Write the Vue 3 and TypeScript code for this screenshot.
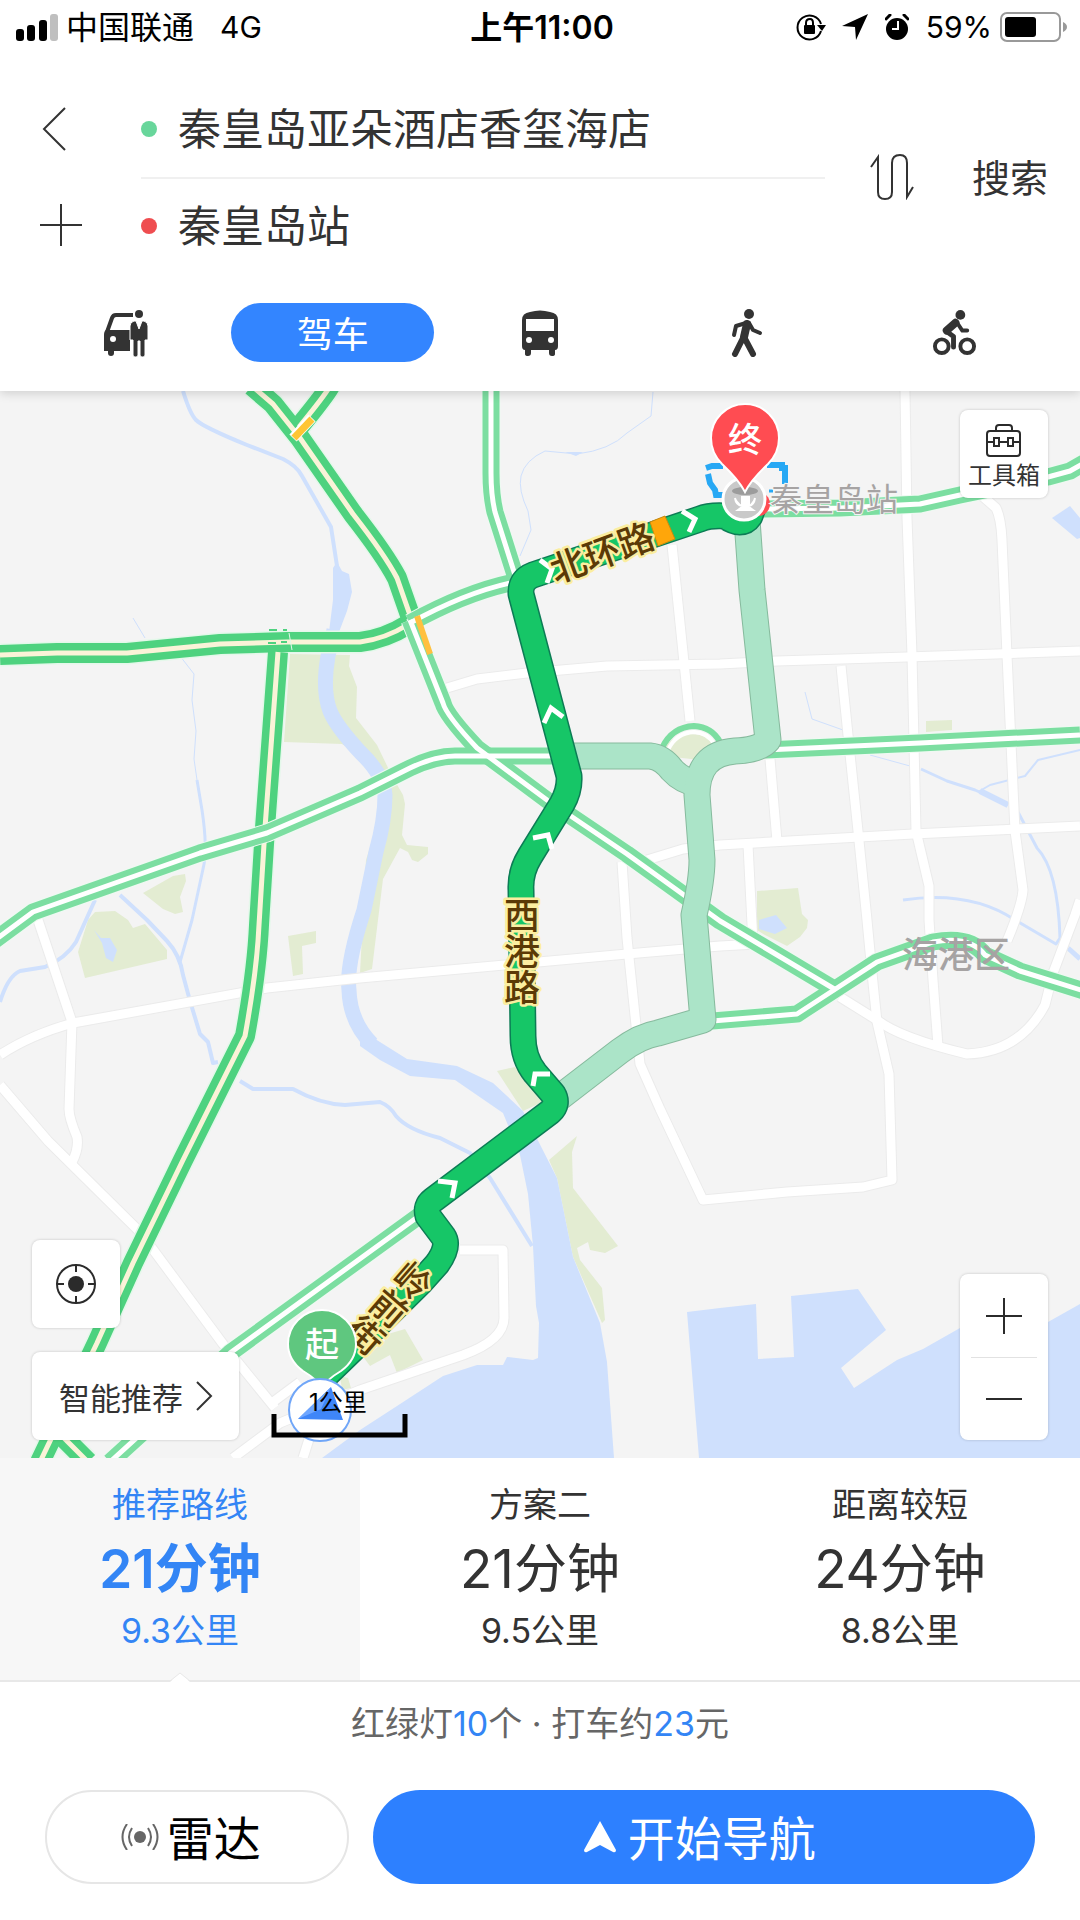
<script setup lang="ts">
import { ref } from 'vue'

interface RoutePlan {
  id: number
  name: string
  minutes: number
  distance: string
}

const origin = ref('秦皇岛亚朵酒店香玺海店')
const destination = ref('秦皇岛站')
const selected = ref(0)

const plans: RoutePlan[] = [
  { id: 0, name: '推荐路线', minutes: 21, distance: '9.3公里' },
  { id: 1, name: '方案二', minutes: 21, distance: '9.5公里' },
  { id: 2, name: '距离较短', minutes: 24, distance: '8.8公里' },
]

const seas: string[] = [
  'M360 1020 L372 1037 L407 1059 L457 1066 L493 1083 L523 1111 L557 1178 L573 1257 L600 1323 L607 1362 L614 1458 L322 1458 L360 1430 L397 1406 L443 1376 L477 1365 L503 1365 L507 1357 L533 1360 L538 1358 L539 1323 L536 1306 L533 1246 L528 1194 L520 1155 L503 1113 L455 1080 L410 1076 L380 1060 L360 1046 Z',
  'M687 1312 L720 1308 L756 1304 L758 1359 L794 1357 L791 1296 L858 1289 L886 1330 L841 1368 L854 1388 L897 1360 L923 1349 L960 1328 L1048 1322 L1080 1304 V1458 H699 Z',
  'M333 568 L337 562 L342 571 L349 574 L352 592 L347 611 L339 632 H329 L333 600 Z',
  'M1052 518 L1070 506 L1080 518 V538 L1077 539 Z',
  'M565 452 L583 452 L576 456 Z',
]

const parks: string[] = [
  'M88 920 L95 912 L115 911 L128 920 L133 928 L145 924 L167 950 V959 L85 978 L78 952 Z',
  'M143 893 L173 876 L185 874 L186 881 L180 897 L183 912 L175 914 L163 909 Z',
  'M290 654 L350 655 L349 666 L357 687 L356 718 L377 745 L392 776 L403 795 L405 804 L402 835 L407 845 L428 847 V854 L418 862 L412 860 L408 852 L400 848 L383 879 L372 969 L360 973 L366 860 L385 800 L360 755 L342 744 L284 742 Z',
  'M288 936 L316 931 V943 L302 946 L303 974 L293 976 Z',
  'M497 1071 L515 1067 L545 1101 L523 1111 Z',
  'M577 1136 L572 1152 L573 1188 L618 1246 L605 1253 L590 1250 L588 1242 L577 1248 L580 1260 L602 1288 L605 1320 L602 1323 L573 1257 L557 1178 L549 1160 Z',
  'M364 1358 L384 1342 L388 1334 L405 1329 L423 1360 L397 1373 L390 1355 L370 1366 Z',
  'M340 1376 L348 1378 L351 1388 L342 1390 Z',
  'M757 891 L798 888 L802 914 L808 920 L807 928 L800 937 L787 946 L765 935 L757 930 Z',
  'M926 721 L952 720 V730 L926 732 Z',
]

const streams: { d: string; w: number }[] = [
  { d: 'M183 391 Q190 414 196 420 Q203 427 247 445 L283 459 Q297 466 302 476 L331 527 L337 566', w: 4 },
  { d: 'M334 630 L328 656 Q322 690 330 711 Q336 726 360 752 Q384 775 385 795 Q385 820 376 852 L364 910 Q346 965 349 990 Q350 1022 372 1044', w: 15 },
  { d: 'M240 1081 L253 1089 L293 1089 Q320 1104 345 1105 L380 1102 Q390 1106 396 1116 Q408 1130 440 1138 L470 1153 L490 1178 L532 1246', w: 4 },
  { d: 'M120 895 L147 920 L167 941 Q180 955 183 975 L190 1001 L200 1034 L208 1042 L213 1063 L218 1062', w: 4 },
  { d: 'M180 962 L192 920 L203 869 Q208 850 202 810 L197 780', w: 3 },
  { d: 'M197 780 L194 759 L196 731 L192 700 L194 674 L180 656 M145 638 L133 618', w: 1 },
  { d: 'M0 1002 Q8 976 20 971 L45 967 Q66 958 76 942 L95 900', w: 4 },
  { d: 'M653 392 L651 416 L627 433 Q610 450 577 454 L545 451 Q525 460 521 476 Q518 490 528 511 L531 530 L520 556', w: 1 },
  { d: 'M921 769 L947 781 L975 790 L1008 805', w: 3 },
  { d: 'M980 791 L1008 805', w: 6 },
  { d: 'M1018 812 L1037 848 Q1058 870 1060 938 L1056 944 L1015 920 Q970 890 903 900', w: 3 },
  { d: 'M1080 750 L1038 760 L1025 776 L990 785 L978 792', w: 2 },
  { d: 'M805 692 L812 719 L843 730 M870 755 L910 766', w: 1 },
  { d: 'M1068 948 L1080 959', w: 5 },
]

const streets: string[] = [
  'M447 688 L477 679 L527 673 L607 666 L720 664 L777 661 L907 657 L1080 651',
  'M672 545 L690 721',
  'M905 391 L907 518 L912 655 L916 831 L929 886 V920 L933 980 L938 1046',
  'M980 494 L996 508 Q1001 518 1002 540 L1007 655 L1015 831 L1023 890 Q1022 905 1007 941',
  'M841 666 L848 735 L858 831 L867 920 L872 973 L877 1022 L889 1074 L892 1180 L863 1187 L787 1192 L703 1200 L660 1109 L640 1064 L627 938 L622 862',
  'M770 759 L777 841',
  'M647 860 L683 849 L720 845 L913 834 L1080 826',
  'M748 845 L753 944',
  'M757 944 L720 946 L627 954 L360 978 L267 988 L73 1023 Q30 1035 0 1055',
  'M38 920 L72 1022 L69 1109 Q69 1118 77 1137 Q79 1149 72 1162',
  'M0 1085 L48 1141 L140 1232 L223 1344 L275 1408',
  'M273 1402 L300 1382 M233 1458 L280 1423 L360 1390 L463 1355 Q504 1340 504 1318 L503 1250 H460',
  'M303 1458 L310 1436',
  'M840 997 L877 1020 Q900 1038 967 1054 Q1020 1052 1045 1005 L1053 973 L1075 915 L1080 900',
]

const arterials: string[] = [
  'M491 391 V473 Q491 495 495 512 L515 575',
  'M520 581 Q470 590 410 623',
  'M410 620 L443 703 Q446 715 477 748 L547 800 L627 854 L720 921 L836 990',
  'M-5 940 L33 912 L200 853 L267 833 L360 793 L410 768 Q435 756 455 756 H575',
  'M765 750 L920 743 L1080 735',
  'M760 509 L840 508 L920 504 L960 495 L1048 477 L1070 471 L1084 463',
  'M700 1022 L797 1014 L877 962 L933 942 Q970 935 985 955 L1020 971 L1084 991',
  'M110 1462 L230 1353 L430 1208',
]

const highways: string[] = [
  'M0 655 L57 653 H127 L220 644 L287 642 L360 642 Q385 639 409 624',
  'M252 386 L273 404 L300 438 L353 514 Q385 555 397 578 L411 618',
  'M330 386 Q326 394 299 427',
  'M278 652 L265 828 L259 925 Q257 970 245 1036 L183 1160 L133 1263 L97 1343 L40 1462',
  'M58 1432 L88 1462',
]

const alternates: string[] = [
  'M568 756 H650 Q662 757 672 770 Q682 781 698 784',
  'M747 520 L752 590 L768 740 Q760 750 735 751 Q697 754 697 795 L702 860 Q702 880 694 915 L703 1020 L658 1033 Q640 1036 620 1051 L555 1101',
]

const mainRoute =
  'M322 1379 L355 1347 L420 1283 L437 1264 Q450 1246 443 1236 L428 1216 Q425 1206 433 1200 L550 1112 Q559 1104 553 1094 L535 1073 Q523 1058 523 1036 L521 890 Q520 872 530 856 L562 804 Q570 790 569 776 L521 594 Q520 580 533 575 L700 519 Q710 515 725 516 Q742 528 750 516 L754 505'

const chevrons: string[] = [
  'M682 511 L695 519 L689 532',
  'M540 560 L552 569 L547 583',
  'M544 723 L551 708 L563 717',
  'M533 838 L548 835 L552 849',
  'M533 1086 L535 1074 L550 1074',
  'M438 1181 L455 1183 L452 1198',
]
</script>

<template>
  <div class="page">
    <header class="header">
      <div class="status">
        <div class="status-side">
          <svg class="signal" viewBox="0 0 42 27" aria-hidden="true">
            <rect x="0" y="15" width="8" height="12" rx="3" />
            <rect x="11" y="11" width="8" height="16" rx="3" />
            <rect x="23" y="6" width="8" height="21" rx="3" />
            <rect x="34" y="0" width="8" height="27" rx="3" fill="#bfbfbf" />
          </svg>
          <span class="carrier">中国联通</span>
          <span class="network">4G</span>
        </div>
        <span class="clock">上午11:00</span>
        <div class="status-side right">
          <svg class="st-lock" viewBox="0 0 30 28" aria-hidden="true">
            <path d="M25 18 A12 12 0 1 1 25 11" fill="none" stroke="#000" stroke-width="2" />
            <path d="M21 12 H30 L26 18 Z" />
            <rect x="8" y="12" width="11" height="9" rx="1" />
            <path d="M10 13 V10 Q10 6 14 6 Q17 6 17 10 V13" fill="none" stroke="#000" stroke-width="2" />
          </svg>
          <svg class="st-loc" viewBox="0 0 26 26" aria-hidden="true"><path d="M26 0 L14 26 L13 13 L0 12 Z" /></svg>
          <svg class="st-alarm" viewBox="0 0 24 26" aria-hidden="true">
            <circle cx="12" cy="15" r="11" />
            <path d="M1 5 L5 1 M23 5 L19 1" stroke="#000" stroke-width="3" stroke-linecap="round" />
            <path d="M13 7 V15 H7" fill="none" stroke="#fff" stroke-width="2" />
          </svg>
          <span class="percent">59%</span>
          <svg class="st-battery" viewBox="0 0 68 30" aria-hidden="true">
            <rect x="1" y="1" width="59" height="28" rx="6" fill="none" stroke="#999" stroke-width="2" />
            <rect x="5" y="5" width="31" height="20" rx="3" />
            <path d="M63 10 Q67 12 67 15 Q67 18 63 20 Z" fill="#999" />
          </svg>
        </div>
      </div>

      <form class="search" @submit.prevent>
        <div class="side-actions">
          <button type="button" class="icon-btn" aria-label="返回">
            <svg viewBox="0 0 44 44"><path d="M26 1 L5 22 L26 43" /></svg>
          </button>
          <button type="button" class="icon-btn" aria-label="添加途经点">
            <svg viewBox="0 0 44 44"><path d="M1 22 H43 M22 1 V43" /></svg>
          </button>
        </div>
        <div class="fields">
          <label class="field">
            <span class="dot start"></span>
            <input v-model="origin" type="text" aria-label="起点" />
          </label>
          <label class="field">
            <span class="dot end"></span>
            <input v-model="destination" type="text" aria-label="终点" />
          </label>
        </div>
        <button type="button" class="swap" aria-label="交换起终点">
          <svg viewBox="0 0 44 46">
            <path d="M1 13 L8 3 V38 Q8 45 15 45 Q22 45 22 38 V9 Q22 1 30 1 Q37 1 37 9 V43 L43 33" />
          </svg>
        </button>
        <button type="submit" class="go">搜索</button>
      </form>

      <nav class="modes" aria-label="出行方式">
        <button type="button" class="mode" aria-label="打车">
          <svg class="m-taxi" viewBox="0 0 45 48">
            <path d="M4 23 L9 9 Q10 6 13 6 H30" fill="none" stroke="#333" stroke-width="4" />
            <path d="M3 21 H27 V42 H1 V26 Q1 22 3 21 Z" />
            <rect x="5" y="38" width="6" height="9" rx="3" />
            <circle cx="10" cy="30" r="3" fill="#fff" />
            <circle cx="36" cy="5" r="4" />
            <path
              d="M31 12 H33 L36 20 L39 12 H41 Q45 13 45 17 V31 H42 V46 Q42 48 40 48 H39 Q37 48 37 46 V32 H35 V46 Q35 48 33 48 H32 Q30 48 30 46 V31 H27 V17 Q27 13 31 12 Z"
              stroke="#fff"
              stroke-width="1"
            />
          </svg>
        </button>
        <button type="button" class="mode active" aria-pressed="true">驾车</button>
        <button type="button" class="mode" aria-label="公交">
          <svg class="m-bus" viewBox="0 0 36 46">
            <path
              fill-rule="evenodd"
              d="M8 2 Q18 -1 28 2 Q36 3 36 10 V36 Q36 40 33 40 V44 Q33 46 30 46 Q27 46 27 43 V40 H9 V43 Q9 46 6 46 Q3 46 3 44 V40 Q0 40 0 36 V10 Q0 3 8 2 Z M4 9 V21 H32 V9 Z"
            />
            <circle cx="7" cy="30" r="3" fill="#fff" />
            <circle cx="29" cy="30" r="3" fill="#fff" />
          </svg>
        </button>
        <button type="button" class="mode" aria-label="步行">
          <svg class="m-walk" viewBox="0 0 32 48">
            <circle cx="18" cy="5" r="5" />
            <g fill="none" stroke="#333" stroke-linecap="round" stroke-linejoin="round">
              <path d="M15 14 L5 17 L3 26" stroke-width="4" />
              <path d="M16 15 L13 28" stroke-width="8" />
              <path d="M18 14 L22 21 L29 24" stroke-width="4" />
              <path d="M12 29 L4 45 M13 28 L22 45" stroke-width="6" />
            </g>
          </svg>
        </button>
        <button type="button" class="mode" aria-label="骑行">
          <svg class="m-bike" viewBox="0 0 46 46">
            <circle cx="29" cy="5" r="5" />
            <g fill="none" stroke="#333" stroke-linecap="round" stroke-linejoin="round">
              <circle cx="10" cy="37" r="7" stroke-width="4" />
              <circle cx="36" cy="37" r="7" stroke-width="4" />
              <path d="M24 13 L15 21" stroke-width="8" />
              <path d="M25 12 L31 21 H36" stroke-width="4" />
              <path d="M15 22 L22 27 V38" stroke-width="5" />
            </g>
          </svg>
        </button>
      </nav>
    </header>

    <main class="map">
      <svg class="map-canvas" viewBox="0 391 1080 1067" role="img" aria-label="路线地图">
        <rect x="0" y="391" width="1080" height="1067" fill="#f4f4f4" />
        <path v-for="d in parks" :key="d" :d="d" fill="#e3ecd2" />
        <path v-for="d in seas" :key="d" :d="d" fill="#cfe0fd" />
        <path
          v-for="s in streams"
          :key="s.d"
          :d="s.d"
          fill="none"
          stroke="#cfe0fd"
          :stroke-width="s.w"
          stroke-linejoin="round"
        />
        <path d="M94 930 L101 938 L110 938 L117 950 L113 962 L106 958 L102 943 Z" fill="#cfe0fd" />
        <path d="M759 920 L776 915 L787 928 L775 934 L759 929 Z" fill="#cfe0fd" />

        <g fill="none" stroke-linejoin="round">
          <path v-for="d in streets" :key="'c' + d" :d="d" stroke="#ebebeb" stroke-width="11" />
          <path v-for="d in streets" :key="d" :d="d" stroke="#fff" stroke-width="9" />

          <path v-for="d in highways" :key="'c' + d" :d="d" stroke="#e4f8ea" stroke-width="23" />
          <path v-for="d in highways" :key="'g' + d" :d="d" stroke="#4ed27f" stroke-width="20" />
          <path v-for="d in highways" :key="d" :d="d" stroke="#faf3d8" stroke-width="5" />

          <path v-for="d in arterials" :key="'c' + d" :d="d" stroke="#eefaf2" stroke-width="19" />
          <path v-for="d in arterials" :key="'g' + d" :d="d" stroke="#7cdea1" stroke-width="17" />
          <path v-for="d in arterials" :key="d" :d="d" stroke="#fff" stroke-width="5" />

          <path d="M269 630 h8 M283 630 h4 M268 643 h8 M281 642 h6" stroke="#4ed27f" stroke-width="2" />
          <path d="M289 633 L292 650" stroke="#e4f8ea" stroke-width="1" />
          <path d="M293 438 L312 418" stroke="#fff" stroke-width="10" />
          <path d="M294 438 L312 419" stroke="#ffc533" stroke-width="7" />
          <path d="M417 616 L430 654" stroke="#ffc040" stroke-width="6" />

          <path d="M664 756 Q664 737 690 734 Q712 734 716 748 L700 760 Z" fill="#e3ecd2" />
          <path d="M662 748 Q672 727 694 726 Q712 727 720 742" stroke="#7cdea1" stroke-width="6" />
          <path d="M668 750 Q676 733 694 732 Q708 733 714 744" stroke="#fff" stroke-width="4" />

          <path v-for="d in alternates" :key="'b' + d" :d="d" stroke="#86ba9d" stroke-width="27" />
          <path v-for="d in alternates" :key="d" :d="d" stroke="#abe4c8" stroke-width="25" />

          <path :d="mainRoute" stroke="#0c7c55" stroke-width="27" />
          <path :d="mainRoute" stroke="#16c667" stroke-width="24" />
          <circle cx="758" cy="504" r="12" fill="#ff4c52" />
          <path v-for="d in chevrons" :key="d" :d="d" stroke="#fff" stroke-width="5" stroke-linejoin="miter" />
          <path d="M650 522 L665 516 L675 539 L658 546 Z" fill="#ffa60a" stroke="#c98a10" stroke-width="1" />
        </g>

        <g class="road-name">
          <text x="602" y="553" transform="rotate(-20 602 553)" text-anchor="middle" dominant-baseline="central">北环路</text>
          <text class="vertical" x="519" y="951" text-anchor="middle">西港路</text>
          <text class="vertical" x="387" y="1306" text-anchor="middle" transform="rotate(41 387 1306)">岭前街</text>
        </g>

        <g fill="none" stroke="#27a8f4" stroke-width="6">
          <path d="M706 468 L712 466 H723 M708 474 L710 483 L715 490 L716 495 H723" />
          <path d="M767 465 H782 V468 H785 V484" />
          <path d="M769 491 H773" stroke-width="3" />
        </g>
        <circle cx="744" cy="499" r="21" fill="#c9c9c9" stroke="#fff" stroke-width="3" />
        <ellipse cx="745" cy="491" rx="13" ry="4" fill="#9c9c9c" />
        <path
          d="M735 498 Q736 505 742 506 M755 498 Q754 505 749 506 M742 497 H749 V507 L753 510 H738 L742 507 Z"
          fill="#fff"
          stroke="#fff"
          stroke-width="2"
        />
        <path
          d="M745 492 Q739 480 722 464 Q711 453 711 438 A34 34 0 0 1 779 438 Q779 453 768 464 Q751 480 745 492 Z"
          fill="#ff4c52"
          stroke="#fff"
          stroke-width="2"
        />
        <text class="pin-text" x="745" y="439" text-anchor="middle" dominant-baseline="central">终</text>
        <text class="place small" x="770" y="499" dominant-baseline="central">秦皇岛站</text>
        <text class="place large" x="902" y="955" dominant-baseline="central">海港区</text>

        <path
          d="M322 1388 Q318 1380 303 1371 Q288 1360 288 1344 A34 34 0 0 1 356 1344 Q356 1360 341 1371 Q326 1380 322 1388 Z"
          fill="#5fc77f"
          stroke="#fff"
          stroke-width="2"
        />
        <text class="pin-text" x="322" y="1344" text-anchor="middle" dominant-baseline="central">起</text>
        <circle cx="320" cy="1410" r="31" fill="#fff" stroke="#70a6f8" stroke-width="2" />
        <path d="M331 1387 L343 1420 L298 1419 Z" fill="#3f86f8" />
        <path d="M331 1387 L321 1409 L298 1419 Z" fill="#6ea6ff" />
        <path d="M274 1414 V1435 H405 V1414" fill="none" stroke="#000" stroke-width="5" />
        <text class="scale" x="338" y="1402" text-anchor="middle" dominant-baseline="central">1公里</text>
      </svg>

      <button type="button" class="card tool">
        <svg viewBox="0 0 36 34" aria-hidden="true">
          <rect x="1" y="7" width="33" height="25" rx="3" />
          <path d="M10 7 V4 Q10 1 13 1 H23 Q26 1 26 4 V7 M1 18 H8 M14 18 H21 M27 18 H34" />
          <rect x="8" y="14" width="5" height="8" />
          <rect x="22" y="14" width="5" height="8" />
        </svg>
        <span>工具箱</span>
      </button>

      <div class="left-tools">
        <button type="button" class="card locate" aria-label="定位">
          <svg viewBox="0 0 42 42">
            <circle cx="21" cy="21" r="19" fill="none" stroke="#2b2b2b" stroke-width="2" />
            <circle cx="21" cy="21" r="8" fill="#2b2b2b" />
            <path d="M21 2 V9 M21 33 V40 M2 21 H9 M33 21 H40" stroke="#2b2b2b" stroke-width="2" />
          </svg>
        </button>
        <button type="button" class="card smart">
          智能推荐
          <svg viewBox="0 0 18 30" aria-hidden="true"><path d="M2 1 L16 15 L2 29" /></svg>
        </button>
      </div>

      <div class="card zoom">
        <button type="button" aria-label="放大">
          <svg viewBox="0 0 36 36"><path d="M0 18 H36 M18 0 V36" /></svg>
        </button>
        <button type="button" aria-label="缩小">
          <svg viewBox="0 0 36 36"><path d="M0 18 H36" /></svg>
        </button>
      </div>
    </main>

    <section class="plans">
      <button
        v-for="plan in plans"
        :key="plan.id"
        type="button"
        class="plan"
        :class="{ selected: plan.id === selected }"
        @click="selected = plan.id"
      >
        <span class="plan-name">{{ plan.name }}</span>
        <span class="plan-time">{{ plan.minutes }}分钟</span>
        <span class="plan-distance">{{ plan.distance }}</span>
        <svg v-if="plan.id === selected" class="notch" viewBox="0 0 20 10" aria-hidden="true">
          <path d="M0 10 L10 1 L20 10 Z" fill="#fff" />
          <path d="M0 9 L10 1 L20 9" fill="none" stroke="#e8e8e8" />
        </svg>
      </button>
    </section>

    <footer class="footer">
      <p class="summary">红绿灯<em>10</em>个 · 打车约<em>23</em>元</p>
      <div class="actions">
        <button type="button" class="radar">
          <svg viewBox="0 0 38 26" aria-hidden="true">
            <circle cx="19" cy="13" r="6" fill="#666" />
            <path d="M11 4 Q5 13 11 22 M27 4 Q33 13 27 22 M6 0 Q-3 13 6 26 M32 0 Q41 13 32 26" fill="none" stroke="#666" stroke-width="2" />
          </svg>
          <span>雷达</span>
        </button>
        <button type="button" class="navigate">
          <svg viewBox="0 0 32 32" aria-hidden="true"><path d="M16 0 L32 29 Q32 32 29 31 L16 24 L3 31 Q0 32 0 29 Z" fill="#fff" /></svg>
          <span>开始导航</span>
        </button>
      </div>
    </footer>
  </div>
</template>

<style>
body {
  background: #fff;
}
</style>

<style scoped>
.page {
  display: flex;
  flex-direction: column;
  min-height: 100vh;
  background: #fff;
  color: #333;
  font-family: Inter, "Noto Sans CJK SC", sans-serif;
  font-size: 34px;
}

button,
input {
  margin: 0;
  padding: 0;
  border: 0;
  background: none;
  color: inherit;
  font: inherit;
}

svg {
  display: block;
  flex: none;
}

.header {
  position: relative;
  z-index: 1;
  background: #fff;
  box-shadow: 0 2px 10px rgba(0, 0, 0, 0.16);
}

.status {
  display: grid;
  grid-template-columns: 1fr auto 1fr;
  align-items: center;
  height: 54px;
  padding: 0 12px 0 16px;
  color: #000;
  font-size: 32px;
}

.status-side {
  display: flex;
  align-items: center;
}

.status-side.right {
  justify-content: flex-end;
}

.signal {
  width: 42px;
  margin-right: 8px;
}

.carrier,
.clock {
  padding-bottom: 4px;
}

.network {
  margin-left: 26px;
  font-size: 30px;
}

.clock {
  font-weight: 600;
}

.st-lock {
  width: 30px;
  margin-right: 16px;
}

.st-loc {
  width: 26px;
  margin-right: 17px;
}

.st-alarm {
  width: 24px;
  margin-right: 17px;
}

.percent {
  margin-right: 8px;
  font-size: 30px;
}

.st-battery {
  width: 68px;
}

.search {
  display: flex;
  align-items: center;
  padding: 27px 32px 0 39px;
}

.side-actions {
  display: flex;
  flex-direction: column;
  width: 102px;
}

.icon-btn {
  display: flex;
  align-items: center;
  height: 96px;
}

.icon-btn svg {
  width: 44px;
  fill: none;
  stroke: #333;
  stroke-width: 2;
}

.fields {
  flex: 1;
  min-width: 0;
}

.field {
  display: flex;
  align-items: center;
  box-sizing: border-box;
  height: 96px;
}

.field + .field {
  border-top: 2px solid #f0f0f0;
}

.dot {
  width: 16px;
  height: 16px;
  margin-right: 21px;
  border-radius: 50%;
}

.dot.start {
  background: #68d69b;
}

.dot.end {
  background: #ef4d50;
}

.field input {
  flex: 1;
  min-width: 0;
  font-size: 43px;
  line-height: 60px;
  outline: none;
}

.swap {
  margin: 0 58px 0 45px;
}

.swap svg {
  width: 44px;
  fill: none;
  stroke: #333;
  stroke-width: 2;
}

.go {
  padding-bottom: 4px;
  font-size: 38px;
}

.modes {
  display: grid;
  grid-template-columns: repeat(5, 1fr);
  padding: 30px 22px 29px;
}

.mode {
  display: flex;
  align-items: center;
  justify-content: center;
  height: 59px;
  margin: 0 2px;
  border-radius: 30px;
}

.mode svg {
  fill: #333;
}

.mode.active {
  padding-bottom: 2px;
  box-sizing: border-box;
  background: #3385ff;
  color: #fff;
  font-size: 36px;
}

.m-taxi,
.m-bike {
  width: 45px;
}

.m-bus {
  width: 36px;
}

.m-walk {
  width: 32px;
}

.map {
  position: relative;
}

.map-canvas {
  width: 100%;
  height: auto;
}

.road-name text {
  fill: #5b3a06;
  stroke: #fbeea0;
  stroke-width: 5px;
  stroke-linejoin: round;
  paint-order: stroke;
  font-size: 36px;
  font-weight: 500;
}

.road-name .vertical {
  writing-mode: vertical-rl;
}

.pin-text {
  fill: #fff;
  font-size: 34px;
  font-weight: 500;
}

.place {
  fill: #a6a3a3;
  stroke: #f4f4f4;
  stroke-width: 2px;
  paint-order: stroke;
}

.place.small {
  font-size: 32px;
}

.place.large {
  font-size: 36px;
  stroke: none;
  font-weight: 500;
}

.scale {
  fill: #000;
  font-size: 24px;
}

.card {
  border-radius: 8px;
  background: #fff;
  box-shadow: 0 0 3px rgba(0, 0, 0, 0.2);
}

.tool {
  position: absolute;
  top: 19px;
  right: 32px;
  display: flex;
  flex-direction: column;
  align-items: center;
  width: 88px;
  height: 88px;
  padding-top: 14px;
  font-size: 24px;
  line-height: 36px;
}

.tool svg {
  width: 36px;
  fill: none;
  stroke: #2b2b2b;
  stroke-width: 2;
}

.left-tools {
  position: absolute;
  bottom: 18px;
  left: 32px;
  display: flex;
  flex-direction: column;
  align-items: flex-start;
  gap: 24px;
}

.locate {
  display: flex;
  align-items: center;
  justify-content: center;
  width: 88px;
  height: 88px;
}

.locate svg {
  width: 42px;
}

.smart {
  display: flex;
  align-items: center;
  gap: 12px;
  height: 88px;
  padding: 0 26px 0 27px;
  font-size: 31px;
}

.smart svg {
  width: 18px;
  fill: none;
  stroke: #333;
  stroke-width: 2;
}

.zoom {
  position: absolute;
  right: 32px;
  bottom: 18px;
  width: 88px;
}

.zoom button {
  display: flex;
  align-items: center;
  justify-content: center;
  width: 100%;
  height: 83px;
}

.zoom button + button {
  position: relative;
}

.zoom button + button::before {
  position: absolute;
  top: 0;
  right: 11px;
  left: 11px;
  height: 1px;
  background: #e2e2e2;
  content: "";
}

.zoom svg {
  width: 36px;
  stroke: #2b2b2b;
  stroke-width: 2;
}

.plans {
  display: grid;
  grid-template-columns: repeat(3, 1fr);
  border-bottom: 2px solid #e8e8e8;
}

.plan {
  position: relative;
  display: flex;
  flex-direction: column;
  align-items: center;
  padding: 22px 0 26px;
}

.plan.selected {
  background: #f7f7f7;
  color: #3385f5;
}

.plan-name {
  line-height: 50px;
}

.plan-time {
  font-size: 53px;
  line-height: 78px;
}

.selected .plan-time {
  font-weight: 600;
}

.plan-distance {
  line-height: 46px;
}

.notch {
  position: absolute;
  bottom: -2px;
  left: 50%;
  width: 20px;
  margin-left: -10px;
}

.footer {
  display: flex;
  flex-direction: column;
  padding: 17px 45px 37px;
}

.summary {
  margin: 0;
  color: #666;
  line-height: 50px;
  text-align: center;
}

.summary em {
  color: #3385f5;
  font-style: normal;
}

.actions {
  display: grid;
  grid-template-columns: 304fr 663fr;
  gap: 24px;
  margin-top: 41px;
}

.actions button {
  display: flex;
  align-items: center;
  justify-content: center;
  box-sizing: border-box;
  gap: 12px;
  height: 94px;
  padding-right: 8px;
  border-radius: 47px;
  font-size: 47px;
}

.actions span {
  padding-bottom: 4px;
}

.actions .radar {
  gap: 8px;
  padding-right: 12px;
  border: 2px solid #e6e6e6;
  color: #000;
}

.radar svg {
  width: 38px;
}

.actions .navigate {
  background: #2d80ff;
  color: #fff;
}

.navigate svg {
  width: 32px;
}
</style>
